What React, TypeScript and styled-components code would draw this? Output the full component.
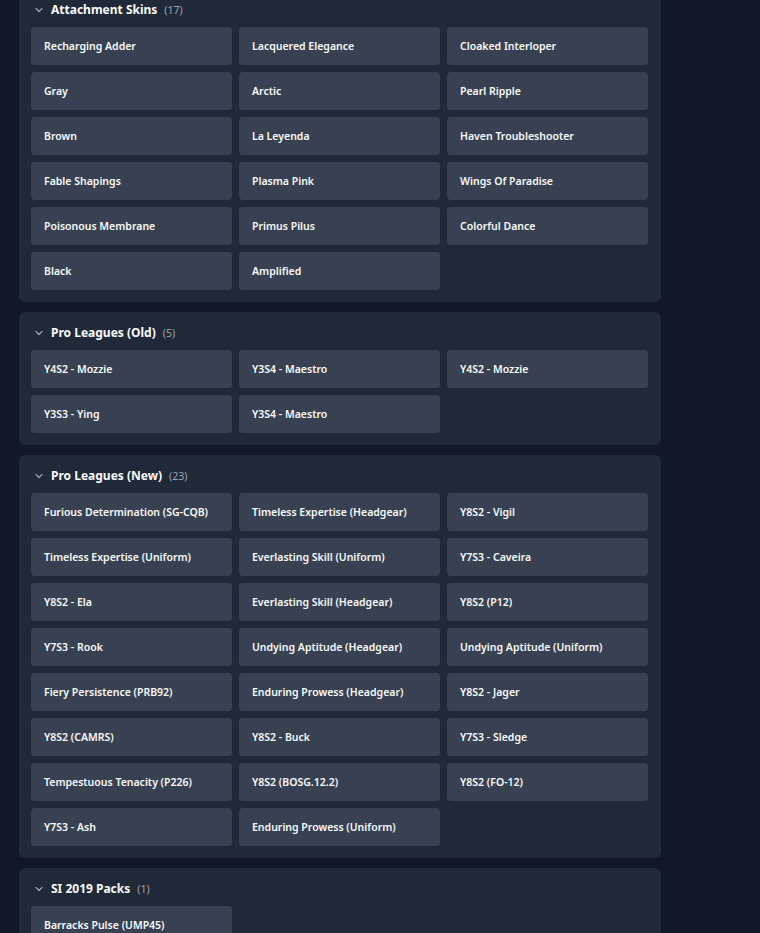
import styled, { createGlobalStyle } from "styled-components";

const GlobalStyle = createGlobalStyle`
  html, body {
    margin: 0;
    padding: 0;
    background-color: #111827;
    font-family: "Noto Sans", "Open Sans", sans-serif;
    color: #f9fafb;
  }
`;

const Page = styled.main`
  width: 642px;
  margin: -11px 0 0 19px;
  display: flex;
  flex-direction: column;
  gap: 10px;
`;

const Panel = styled.section`
  background-color: #1f2937;
  border-radius: 6px;
  padding: 10px 13px 12px 12px;
`;

const Header = styled.div`
  display: flex;
  align-items: center;
  height: 21px;
  margin-bottom: 7px;
  padding-left: 3px;
`;

const Chevron = styled.svg`
  width: 10px;
  height: 10px;
  margin-right: 7px;
  color: #9ca3af;
`;

const Title = styled.h2`
  margin: 0;
  font-size: 12px;
  font-weight: 700;
  color: #f9fafb;
`;

const Count = styled.span`
  margin-left: 7px;
  font-size: 10.5px;
  color: #9ca3af;
`;

const Grid = styled.div`
  display: grid;
  grid-template-columns: repeat(3, 1fr);
  gap: 7px;
`;

const Item = styled.button`
  height: 38px;
  border: none;
  border-radius: 4px;
  background-color: #374151;
  color: #f9fafb;
  font-family: inherit;
  font-size: 10.5px;
  font-weight: 600;
  text-align: left;
  padding: 0 13px;
  cursor: pointer;
`;

const groups: { title: string; items: string[] }[] = [
  {
    title: "Attachment Skins",
    items: [
      "Recharging Adder",
      "Lacquered Elegance",
      "Cloaked Interloper",
      "Gray",
      "Arctic",
      "Pearl Ripple",
      "Brown",
      "La Leyenda",
      "Haven Troubleshooter",
      "Fable Shapings",
      "Plasma Pink",
      "Wings Of Paradise",
      "Poisonous Membrane",
      "Primus Pilus",
      "Colorful Dance",
      "Black",
      "Amplified",
    ],
  },
  {
    title: "Pro Leagues (Old)",
    items: ["Y4S2 - Mozzie", "Y3S4 - Maestro", "Y4S2 - Mozzie", "Y3S3 - Ying", "Y3S4 - Maestro"],
  },
  {
    title: "Pro Leagues (New)",
    items: [
      "Furious Determination (SG-CQB)",
      "Timeless Expertise (Headgear)",
      "Y8S2 - Vigil",
      "Timeless Expertise (Uniform)",
      "Everlasting Skill (Uniform)",
      "Y7S3 - Caveira",
      "Y8S2 - Ela",
      "Everlasting Skill (Headgear)",
      "Y8S2 (P12)",
      "Y7S3 - Rook",
      "Undying Aptitude (Headgear)",
      "Undying Aptitude (Uniform)",
      "Fiery Persistence (PRB92)",
      "Enduring Prowess (Headgear)",
      "Y8S2 - Jager",
      "Y8S2 (CAMRS)",
      "Y8S2 - Buck",
      "Y7S3 - Sledge",
      "Tempestuous Tenacity (P226)",
      "Y8S2 (BOSG.12.2)",
      "Y8S2 (FO-12)",
      "Y7S3 - Ash",
      "Enduring Prowess (Uniform)",
    ],
  },
  {
    title: "SI 2019 Packs",
    items: ["Barracks Pulse (UMP45)"],
  },
];

const App = (): JSX.Element => {
  return (
    <>
      <GlobalStyle />
      <Page>
        {groups.map((group) => (
          <Panel key={group.title}>
            <Header>
              <Chevron viewBox="0 0 10 10" fill="none">
                <path d="M2 3.5 L5 6.5 L8 3.5" stroke="currentColor" strokeWidth="1.2" strokeLinecap="round" strokeLinejoin="round" />
              </Chevron>
              <Title>{group.title}</Title>
              <Count>({group.items.length})</Count>
            </Header>
            <Grid>
              {group.items.map((item, i) => (
                <Item key={i}>{item}</Item>
              ))}
            </Grid>
          </Panel>
        ))}
      </Page>
    </>
  );
};

export default App;
